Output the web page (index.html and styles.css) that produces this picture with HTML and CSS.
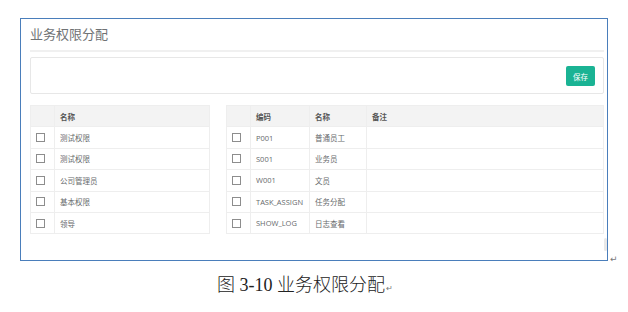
FILE: index.html
```html
<!DOCTYPE html>
<html lang="zh-CN">
<head>
    <meta charset="UTF-8">
    <title>业务权限分配</title>
    <link rel="stylesheet" href="styles.css">
</head>
<body>

    <!-- Screenshot frame -->
    <div class="frame-line">
        <div class="frame">
            <h2 class="page-title">业务权限分配</h2>

            <!-- Toolbar -->
            <div class="toolbar">
                <button class="btn-save">保存</button>
            </div>

            <div class="tables">
                <!-- Roles -->
                <table class="grid grid-left">
                    <thead>
                        <tr>
                            <th class="col-check"></th>
                            <th>名称</th>
                        </tr>
                    </thead>
                    <tbody>
                        <tr><td class="col-check"><span class="checkbox"></span></td><td>测试权限</td></tr>
                        <tr><td class="col-check"><span class="checkbox"></span></td><td>测试权限</td></tr>
                        <tr><td class="col-check"><span class="checkbox"></span></td><td>公司管理员</td></tr>
                        <tr><td class="col-check"><span class="checkbox"></span></td><td>基本权限</td></tr>
                        <tr><td class="col-check"><span class="checkbox"></span></td><td>领导</td></tr>
                    </tbody>
                </table>

                <!-- Business roles -->
                <table class="grid grid-right">
                    <thead>
                        <tr>
                            <th class="col-check"></th>
                            <th class="col-code">编码</th>
                            <th class="col-name">名称</th>
                            <th>备注</th>
                        </tr>
                    </thead>
                    <tbody>
                        <tr><td class="col-check"><span class="checkbox"></span></td><td>P001</td><td>普通员工</td><td></td></tr>
                        <tr><td class="col-check"><span class="checkbox"></span></td><td>S001</td><td>业务员</td><td></td></tr>
                        <tr><td class="col-check"><span class="checkbox"></span></td><td>W001</td><td>文员</td><td></td></tr>
                        <tr><td class="col-check"><span class="checkbox"></span></td><td>TASK_ASSIGN</td><td>任务分配</td><td></td></tr>
                        <tr><td class="col-check"><span class="checkbox"></span></td><td>SHOW_LOG</td><td>日志查看</td><td></td></tr>
                    </tbody>
                </table>
            </div>
            <span class="scroll-thumb"></span>
        </div>
        <span class="para-mark">↵</span>
    </div>

    <!-- Figure caption -->
    <p class="caption">图 3-10 业务权限分配<span class="para-mark small">↵</span></p>

</body>
</html>
```

FILE: styles.css
```css
/* Page */
body {
    margin: 0;
    background-color: #fff;
    font-family: "Open Sans", "Noto Sans CJK SC", sans-serif;
}

/* Screenshot frame */
.frame-line {
    display: flex;
    align-items: flex-end;
    padding: 18px 0 0 20px;
}

.frame {
    position: relative;
    width: 574px;
    height: 241px;
    padding: 0 3px 0 9px;
    border: 1px solid #4a7ebb;
    background-color: #fff;
}

.para-mark {
    font-family: "DejaVu Sans", sans-serif;
    font-size: 9px;
    line-height: 9px;
    color: #777;
    margin-left: 2px;
    margin-bottom: -3px;
}

.page-title {
    margin: 0;
    padding: 6px 0 7px 0;
    font-size: 13px;
    line-height: 18px;
    font-weight: normal;
    color: #6f7274;
    border-bottom: 2px solid #f0f0f0;
}

/* Toolbar */
.toolbar {
    display: flex;
    justify-content: flex-end;
    margin-top: 5px;
    height: 19px;
    padding: 8px;
    border: 1px solid #e7e7e7;
    border-radius: 2px;
}

.btn-save {
    width: 29px;
    height: 20px;
    padding: 0;
    border: none;
    border-radius: 2px;
    background-color: #1ab394;
    color: #fff;
    font-family: "Noto Sans CJK SC", sans-serif;
    font-size: 7.5px;
}

/* Tables */
.tables {
    display: flex;
    gap: 16px;
    margin-top: 11px;
}

.grid {
    border-collapse: collapse;
    font-size: 7.5px;
    color: #676a6c;
}

.grid-left {
    width: 180px;
}

.grid-right {
    flex: 1;
}

.grid th,
.grid td {
    height: 20.4px;
    padding: 0 5px;
    border: 1px solid #eeeeee;
    text-align: left;
    white-space: nowrap;
}

.grid th {
    background-color: #f3f3f3;
    font-weight: 600;
    color: #555;
}

.grid .col-check {
    width: 13px;
    padding: 0 5px;
}

.grid .col-code {
    width: 48px;
}

.grid .col-name {
    width: 46px;
}

.checkbox {
    display: block;
    width: 7px;
    height: 7px;
    border: 1px solid #8d8d8d;
    background-color: #fff;
}

.scroll-thumb {
    position: absolute;
    right: 0;
    top: 219px;
    width: 3px;
    height: 13px;
    border-radius: 2px;
    background-color: #e8e8e8;
}

/* Caption */
.caption {
    margin: 9px 0 0 0;
    padding-right: 18px;
    text-align: center;
    font-family: "Liberation Serif", "Noto Sans CJK SC", serif;
    font-size: 18px;
    font-weight: 300;
    color: #222;
}

.para-mark.small {
    font-size: 8px;
    margin-left: 1px;
}
```
